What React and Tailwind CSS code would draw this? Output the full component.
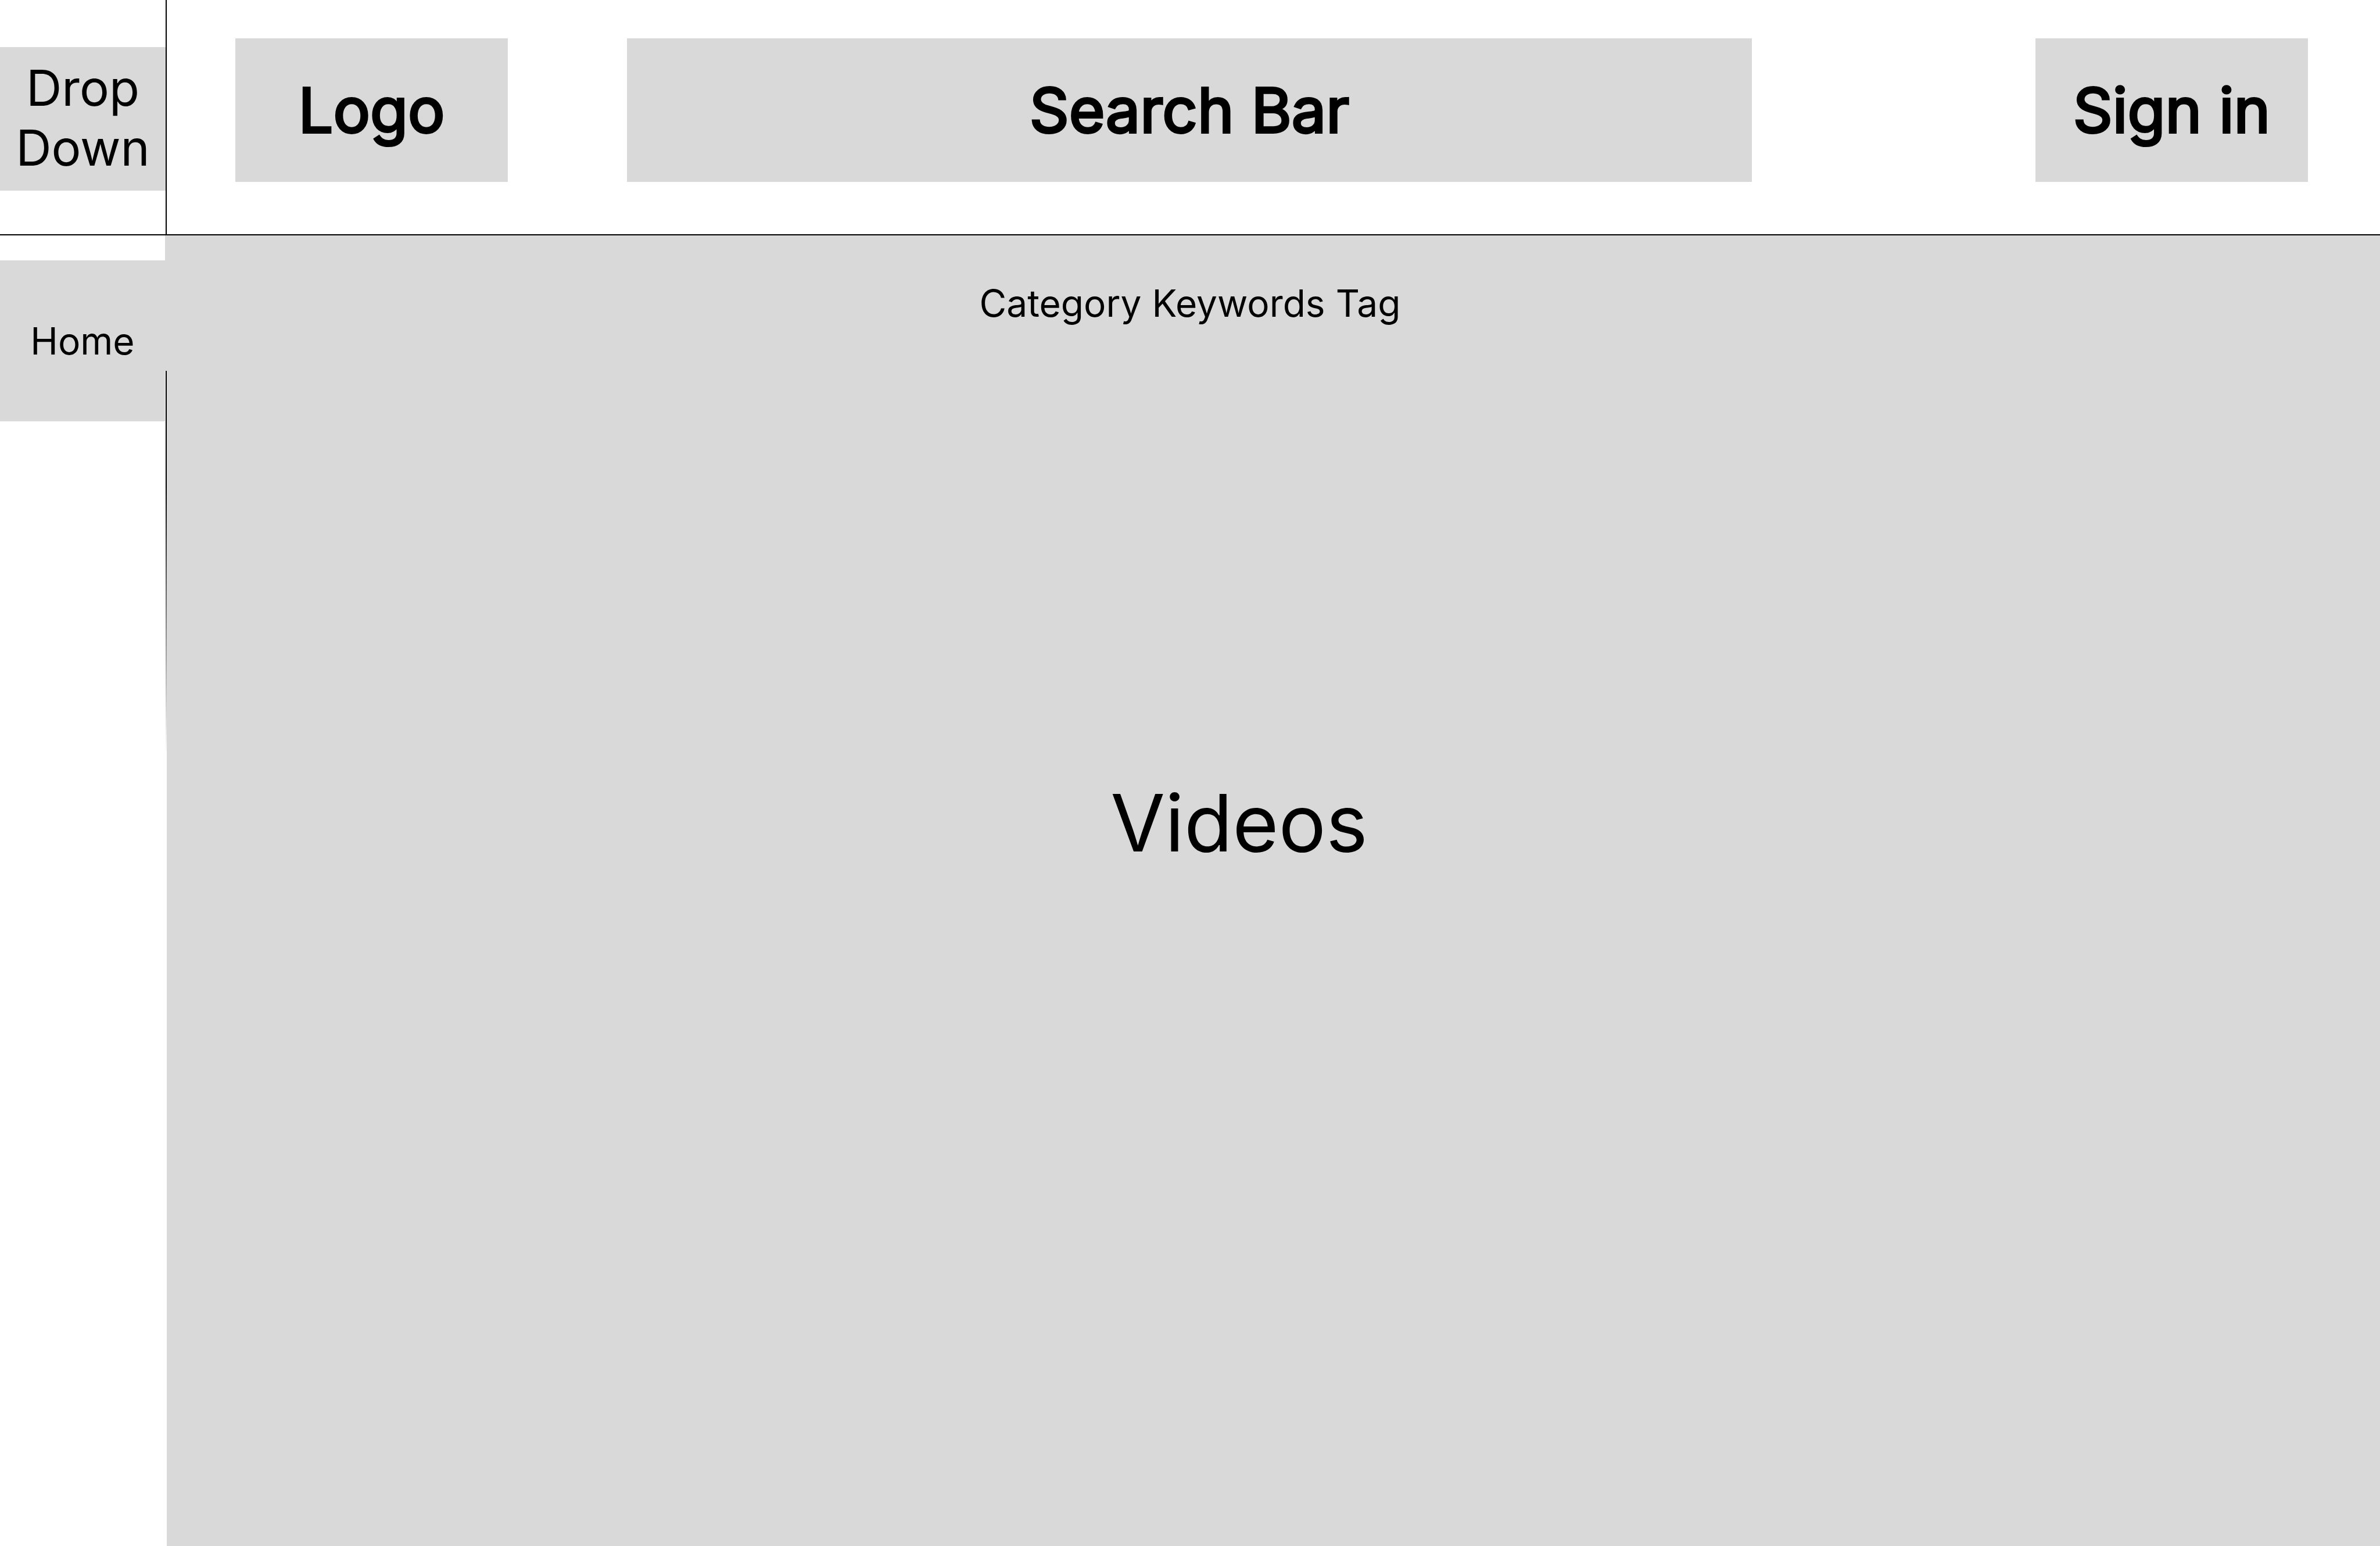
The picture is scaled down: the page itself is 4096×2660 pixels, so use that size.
export default function App() {
  return (
    <div className="flex min-h-screen flex-col bg-white font-['Inter',sans-serif] text-black">
      <header className="flex h-[405px] border-b-2 border-black">
        <div className="w-[287px] shrink-0 border-r-2 border-black pt-[81px]">
          <button
            type="button"
            className="block h-[247px] w-full bg-[#d9d9d9] pb-1 text-[85px] leading-[103px]"
          >
            Drop
            <br />
            Down
          </button>
        </div>
        <div className="flex flex-1 items-start pt-[66px] pr-[124px] pl-[118px] text-[106px] [-webkit-text-stroke:4px_black]">
          <a
            href="#"
            className="flex h-[247px] w-[469px] shrink-0 items-center justify-center bg-[#d9d9d9]"
          >
            Logo
          </a>
          <input
            type="text"
            aria-label="Search"
            placeholder="Search Bar"
            className="mr-[488px] ml-[205px] h-[247px] min-w-0 flex-1 bg-[#d9d9d9] text-center placeholder:text-black placeholder:opacity-100"
          />
          <button
            type="button"
            className="h-[247px] w-[469px] shrink-0 bg-[#d9d9d9]"
          >
            Sign in
          </button>
        </div>
      </header>

      <div className="flex flex-1">
        <nav className="w-[284px] shrink-0 pt-[43px]">
          <a
            href="#"
            className="flex h-[277px] items-center justify-center bg-[#d9d9d9] text-[64px]"
          >
            Home
          </a>
        </nav>
        <main className="flex flex-1 flex-col">
          <div className="flex h-[233px] items-center justify-center bg-[#d9d9d9] pr-[284px] text-[64px]">
            Category Keywords Tag
          </div>
          <div className="flex flex-1 pl-px">
            <div className="h-[660px] w-0.5 bg-linear-to-b from-black from-30% to-transparent" />
            <section className="flex flex-1 justify-center bg-[#d9d9d9] pt-[688px] pr-[118px]">
              <h1 className="text-[136px] leading-[180px]">Videos</h1>
            </section>
          </div>
        </main>
      </div>
    </div>
  );
}
